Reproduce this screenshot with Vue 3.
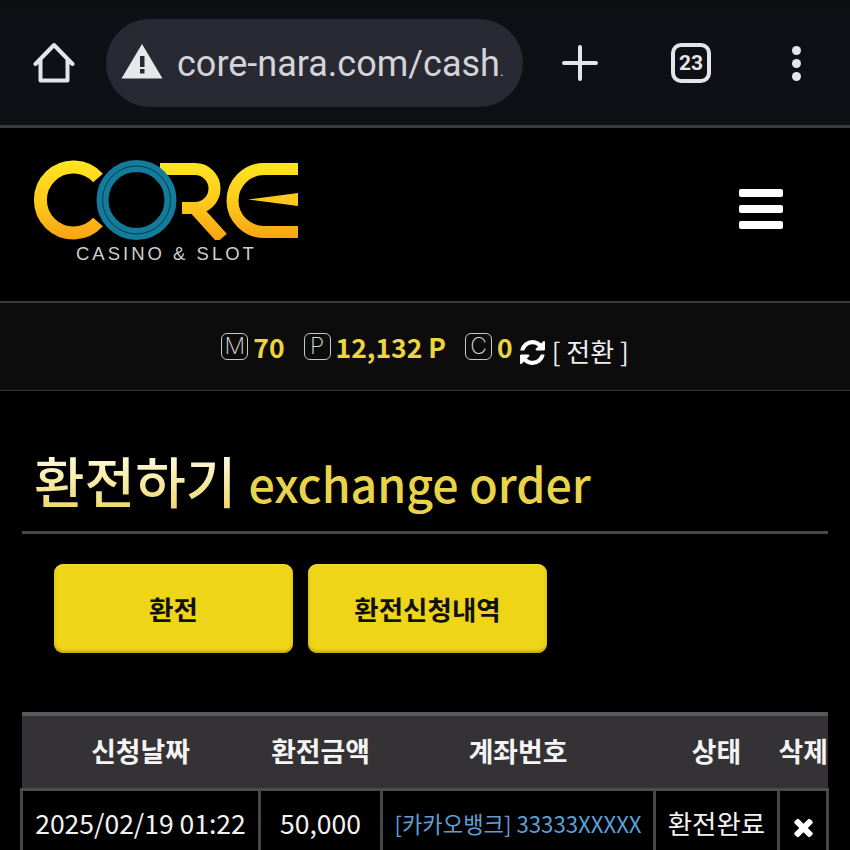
<script setup>
import { ref } from 'vue';

const points = ref([
  { key: 'M', value: '70' },
  { key: 'P', value: '12,132 P' },
  { key: 'C', value: '0' }
]);

const columns = ['신청날짜', '환전금액', '계좌번호', '상태', '삭제'];

const orders = ref([
  { id: 1, date: '2025/02/19 01:22', amount: '50,000', account: '[카카오뱅크] 33333XXXXX', status: '환전완료' }
]);
</script>

<template>
  <div class="phone">
    <div class="browser-bar">
      <svg class="home-icon" width="42" height="42" viewBox="0 0 42 42" fill="none" stroke="#e4e5e9" stroke-width="4" stroke-linejoin="round" stroke-linecap="round">
        <path d="M2.500 22 L21 3 L39.500 22 M7.500 18 V38.500 H34.500 V18" />
      </svg>
      <div class="url-pill">
        <svg class="warn-icon" width="42" height="36" viewBox="0 0 42 36">
          <path d="M21 1 L41.500 35.500 H0.500 Z" fill="#e6e7ea" />
          <rect x="19" y="13" width="4.500" height="11" fill="#282932" />
          <rect x="19" y="26" width="4.500" height="4.500" fill="#282932" />
        </svg>
        <span class="url-text">core-nara.com/cash<small>.</small></span>
      </div>
      <svg class="plus-icon" width="36" height="36" viewBox="0 0 36 36" stroke="#e4e5e9" stroke-width="4" stroke-linecap="round">
        <path d="M18 2 V34 M2 18 H34" />
      </svg>
      <div class="tab-count">23</div>
      <div class="dots"><i></i><i></i><i></i></div>
    </div>

    <header class="site-header">
      <div class="logo">
        <svg class="logo-mark" width="268" height="80" viewBox="32 160 268 80" role="img" aria-label="CORE">
          <defs>
            <linearGradient id="coreGold" gradientUnits="userSpaceOnUse" x1="0" y1="160" x2="0" y2="240">
              <stop offset="0" stop-color="#ffe722" />
              <stop offset="0.55" stop-color="#fdc81a" />
              <stop offset="1" stop-color="#f7a312" />
            </linearGradient>
          </defs>
          <g fill="none" stroke="url(#coreGold)" stroke-width="13">
            <path d="M98 178 A33 33 0 1 0 98 222" />
            <path d="M160 169 H195 A19.500 19.500 0 0 1 195 208 H182" stroke-width="12" />
            <path d="M193 206 L222 238" />
            <path d="M298 169 H264 A31.500 31.500 0 0 0 264 232 H298" stroke-width="12" />
          </g>
          <path d="M298 193 V206 L248 199.500 Z" fill="#fdc81a" />
          <circle cx="136.500" cy="200" r="34" fill="none" stroke="#137c9d" stroke-width="12" />
          <circle cx="136.500" cy="200" r="34" fill="none" stroke="#06394a" stroke-width="1" />
        </svg>
        <div class="logo-sub">CASINO &amp; SLOT</div>
      </div>
      <div class="hamburger"><i></i><i></i><i></i></div>
    </header>

    <div class="points-bar">
      <div v-for="p in points" :key="p.key" class="point">
        <span class="point-key">{{ p.key }}</span>
        <span class="point-value">{{ p.value }}</span>
      </div>
      <svg class="refresh-icon" width="25" height="25" viewBox="0 0 1536 1536">
        <path fill="#fff" d="M1511 928q0 5-1 7-64 268-268 434.500t-478 166.500q-146 0-282.500-55t-243.500-157l-129 129q-19 19-45 19t-45-19-19-45v-448q0-26 19-45t45-19h448q26 0 45 19t19 45-19 45l-137 137q71 66 161 102t187 36q134 0 250-65t186-179q11-17 53-117 8-23 30-23h192q13 0 22.500 9.500t9.500 22.500zm25-800v448q0 26-19 45t-45 19h-448q-26 0-45-19t-19-45 19-45l138-138q-148-137-349-137-134 0-250 65t-186 179q-11 17-53 117-8 23-30 23h-199q-13 0-22.500-9.500t-9.500-22.500v-7q65-268 270-434.500t480-166.500q146 0 284 55.500t245 156.500l130-129q19-19 45-19t45 19 19 45z" />
      </svg>
      <span class="convert">[ 전환 ]</span>
    </div>

    <main class="content">
      <h1 class="page-title">
        <span class="title-ko">환전하기</span>
        <span class="title-en">exchange order</span>
      </h1>

      <div class="tabs">
        <button class="tab-btn">환전</button>
        <button class="tab-btn">환전신청내역</button>
      </div>

      <table class="order-table">
        <colgroup>
          <col style="width: 238px" />
          <col style="width: 122px" />
          <col style="width: 273px" />
          <col style="width: 124px" />
          <col style="width: 49px" />
        </colgroup>
        <thead>
          <tr>
            <th v-for="c in columns" :key="c">{{ c }}</th>
          </tr>
        </thead>
        <tbody>
          <tr v-for="o in orders" :key="o.id">
            <td>{{ o.date }}</td>
            <td>{{ o.amount }}</td>
            <td class="account">{{ o.account }}</td>
            <td>{{ o.status }}</td>
            <td>
              <svg class="del-icon" width="23" height="28" viewBox="0 0 1408 1792">
                <path fill="#fff" d="M1298 1322q0 40-28 68l-136 136q-28 28-68 28t-68-28l-294-294-294 294q-28 28-68 28t-68-28l-136-136q-28-28-28-68t28-68l294-294-294-294q-28-28-28-68t28-68l136-136q28-28 68-28t68 28l294 294 294-294q28-28 68-28t68 28l136 136q28 28 28 68t-28 68l-294 294 294 294q28 28 28 68z" />
              </svg>
            </td>
          </tr>
        </tbody>
      </table>
    </main>
  </div>
</template>

<style>
html, body {
  margin: 0;
  background: #000;
  overflow: hidden;
}
</style>

<style scoped>
.phone {
  width: 850px;
  height: 850px;
  overflow: hidden;
  background: #000;
  font-family: "Noto Sans CJK KR", "Noto Sans", sans-serif;
  color: #fff;
}

/* browser chrome */
.browser-bar {
  height: 125px;
  box-sizing: border-box;
  display: flex;
  align-items: center;
  padding: 1px 0 0 33px;
  background: linear-gradient(180deg, #0e0f11 0, #0f1015 16px, #0f1015 100%);
}
.home-icon {
  flex: none;
  margin-right: 31px;
}
.url-pill {
  width: 417px;
  height: 88px;
  box-sizing: border-box;
  flex: none;
  display: flex;
  align-items: center;
  padding-left: 15px;
  border-radius: 44px;
  background: #282932;
}
.warn-icon {
  margin-top: -5px;
}
.url-text {
  margin: 2px 0 0 14px;
  font-family: Roboto, sans-serif;
  font-size: 36px;
  color: #d3d4d9;
  white-space: nowrap;
}
.url-text small {
  font-size: 14px;
}
.plus-icon {
  flex: none;
  margin-left: 39px;
}
.tab-count {
  flex: none;
  width: 40px;
  height: 40px;
  box-sizing: border-box;
  margin-left: 73px;
  border: 4px solid #e4e5e9;
  border-radius: 10px;
  font-family: Roboto, sans-serif;
  font-size: 21px;
  font-weight: 700;
  line-height: 32px;
  text-align: center;
  color: #e4e5e9;
}
.dots {
  flex: none;
  margin-left: 81px;
  display: flex;
  flex-direction: column;
  gap: 4px;
}
.dots i {
  width: 9px;
  height: 9px;
  border-radius: 50%;
  background: #e4e5e9;
}

/* site header */
.site-header {
  height: 176px;
  box-sizing: border-box;
  display: flex;
  justify-content: space-between;
  align-items: flex-start;
  padding: 32px 67px 0 32px;
  border-top: 3px solid #3a3a3c;
}
.logo-mark {
  display: block;
}
.logo-sub {
  margin: 2px 0 0 44px;
  font-family: "Liberation Sans", sans-serif;
  font-size: 18.500px;
  line-height: 24px;
  letter-spacing: 3px;
  color: #cfcfcf;
  white-space: nowrap;
}
.hamburger {
  margin-top: 29px;
  display: flex;
  flex-direction: column;
  gap: 8px;
}
.hamburger i {
  width: 44px;
  height: 8px;
  border-radius: 2px;
  background: #fff;
}

/* points */
.points-bar {
  height: 90px;
  box-sizing: border-box;
  display: flex;
  align-items: center;
  justify-content: center;
  background: #0c0c0d;
  border-top: 2px solid #39393b;
  border-bottom: 1px solid #39393b;
}
.point {
  display: flex;
  align-items: center;
  margin-right: 19px;
}
.point:last-of-type {
  margin-right: 7px;
}
.point-key {
  width: 27px;
  height: 27px;
  box-sizing: border-box;
  margin-right: 5px;
  border: 1.500px solid #c8c8c8;
  border-radius: 6px;
  font-family: Inter, sans-serif;
  font-size: 23px;
  font-weight: 200;
  line-height: 24px;
  text-align: center;
  color: #d8d8d8;
}
.point-value {
  font-size: 26.500px;
  font-weight: 700;
  line-height: 30px;
  color: #ecd63f;
}
.refresh-icon {
  margin-top: 11px;
}
.convert {
  margin: 9px 0 0 7px;
  font-size: 26px;
  line-height: 30px;
  color: #eee;
  white-space: pre;
}

/* content */
.content {
  padding: 0 22px;
}
.page-title {
  height: 143px;
  box-sizing: border-box;
  margin: 0;
  padding-top: 52px;
  display: flex;
  align-items: baseline;
  gap: 12px;
  border-bottom: 3px solid #48474b;
  font-weight: 400;
  white-space: nowrap;
}
.title-ko {
  margin-left: 12px;
  font-size: 55px;
  line-height: 72px;
  font-weight: 500;
  background: linear-gradient(180deg, #fffbe0 15%, #f0da6e 90%);
  -webkit-background-clip: text;
  background-clip: text;
  color: transparent;
}
.title-en {
  font-size: 46.500px;
  line-height: 72px;
  font-weight: 500;
  color: #e8d34a;
}
.tabs {
  display: flex;
  gap: 15px;
  padding: 30px 0 0 32px;
}
.tab-btn {
  width: 239px;
  height: 89px;
  padding: 0;
  border: none;
  border-radius: 9px;
  background: #efd518;
  box-shadow: inset 0 -2px 3px rgba(170, 130, 0, 0.6), inset 0 1px 2px rgba(255, 240, 120, 0.4);
  font-family: inherit;
  font-size: 26.500px;
  font-weight: 700;
  color: #111;
}
.order-table {
  width: 806px;
  margin: 59px 0 0 -2px;
  table-layout: fixed;
  border-collapse: collapse;
}
.order-table th {
  height: 75px;
  padding: 0 0 3px;
  box-sizing: border-box;
  background: #343235;
  border-top: 4px solid #59585c;
  border-bottom: 3px solid #4c4b4f;
  font-size: 26.800px;
  font-weight: 700;
  color: #f4f4f4;
  white-space: nowrap;
}
.order-table td {
  height: 64px;
  padding: 0;
  border: 3px solid #48474b;
  border-top: none;
  font-size: 26.500px;
  text-align: center;
  color: #f2f2f2;
  white-space: nowrap;
}
.order-table td.account {
  font-size: 22.200px;
  color: #5b9fd6;
}
.del-icon {
  display: block;
  margin: 9px auto 0;
}
</style>
